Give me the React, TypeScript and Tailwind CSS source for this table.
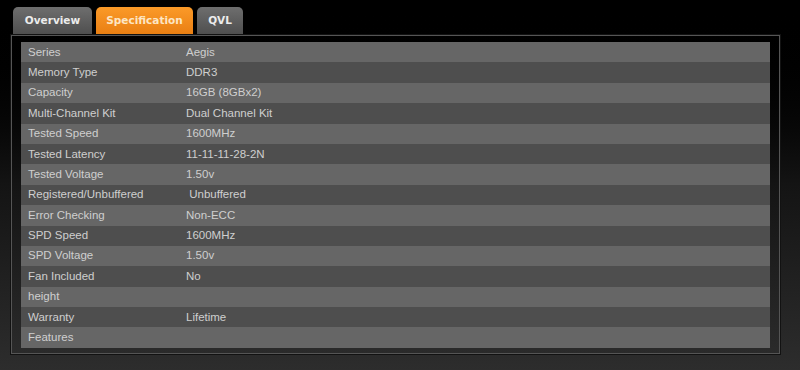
const specs: [string, string][] = [
  ['Series', 'Aegis'],
  ['Memory Type', 'DDR3'],
  ['Capacity', '16GB (8GBx2)'],
  ['Multi-Channel Kit', 'Dual Channel Kit'],
  ['Tested Speed', '1600MHz'],
  ['Tested Latency', '11-11-11-28-2N'],
  ['Tested Voltage', '1.50v'],
  ['Registered/Unbuffered', '\u00a0Unbuffered'],
  ['Error Checking', 'Non-ECC'],
  ['SPD Speed', '1600MHz'],
  ['SPD Voltage', '1.50v'],
  ['Fan Included', 'No'],
  ['height', ''],
  ['Warranty', 'Lifetime'],
  ['Features', ''],
];

const tabs = [
  { label: 'Overview', width: 'w-[79px]', active: false },
  { label: 'Specification', width: 'w-[97px]', active: true },
  { label: 'QVL', width: 'w-[46px]', active: false },
];

export default function App() {
  return (
    <div className="w-[800px] h-[370px] bg-gradient-to-b from-black via-[#141414] to-[#2d2d2d] pt-[7px] overflow-hidden">
      <div className="flex gap-[4px] ml-[13px]">
        {tabs.map((t) => (
          <div
            key={t.label}
            className={`${t.width} h-[27px] rounded-t-[5px] flex items-center justify-center text-[10.5px] font-bold font-['DejaVu_Sans',sans-serif] ${
              t.active
                ? 'bg-gradient-to-b from-[#fb9a28] to-[#e97f12] text-[#fde6c4]'
                : 'bg-gradient-to-b from-[#6e6e6e] to-[#4f4f4f] text-[#ececec]'
            }`}
          >
            {t.label}
          </div>
        ))}
      </div>

      {/* spec panel: dark outer edge, grey inner line */}
      <div className="ml-[10px] w-[771px] border border-[#121212]">
        <div className="border border-[#555555] px-[9px] pt-[6px] pb-[5px]">
          <div className="font-['Liberation_Sans',Arial,sans-serif] text-[11.5px] text-[#cfcfcf]">
            {specs.map(([k, v], i) => (
              <div
                key={k}
                className={`grid grid-cols-[165px_1fr] items-center h-[20.4px] ${
                  i % 2 === 0 ? 'bg-[#666666]' : 'bg-[#4e4e4e]'
                }`}
              >
                <span className="pl-[7px] whitespace-nowrap">{k}</span>
                <span className="whitespace-nowrap">{v}</span>
              </div>
            ))}
          </div>
        </div>
      </div>
    </div>
  );
}
